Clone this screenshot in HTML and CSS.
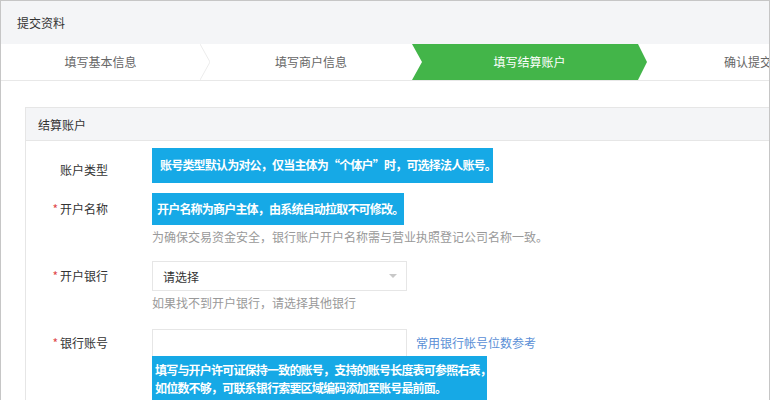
FILE: index.html
```html
<!DOCTYPE html>
<html lang="zh-CN">
<head>
<meta charset="utf-8">
<link rel="stylesheet" href="styles.css">
</head>
<body>
<div class="frame">
  <div class="page-head">提交资料</div>
  <div class="steps">
    <div class="step step-1">填写基本信息</div>
    <svg class="sep" width="10" height="36" viewBox="0 0 10 36"><polyline points="0,0 10,18 0,36" fill="none" stroke="#ececec" stroke-width="1"/></svg>
    <div class="step step-2">填写商户信息</div>
    <div class="step step-3">填写结算账户</div>
    <div class="step step-4">确认提交</div>
  </div>
  <div class="content">
    <div class="panel">
      <div class="panel-head">结算账户</div>
      <div class="panel-body">
        <div class="row row-1">
          <div class="label">账户类型</div>
          <div class="field">
            <div class="tip tip-1">账号类型默认为对公，仅当主体为“个体户”时，可选择法人账号。</div>
          </div>
        </div>
        <div class="row row-2">
          <div class="label"><span class="star">*</span>开户名称</div>
          <div class="field">
            <div class="tip tip-2">开户名称为商户主体，由系统自动拉取不可修改。</div>
            <div class="help">为确保交易资金安全，银行账户开户名称需与营业执照登记公司名称一致。</div>
          </div>
        </div>
        <div class="row row-3">
          <div class="label"><span class="star">*</span>开户银行</div>
          <div class="field">
            <div class="select"><span>请选择</span><span class="caret"></span></div>
            <div class="help">如果找不到开户银行，请选择其他银行</div>
          </div>
        </div>
        <div class="row row-4">
          <div class="label"><span class="star">*</span>银行账号</div>
          <div class="field">
            <div class="input-line">
              <div class="input"></div>
              <a class="link" href="#">常用银行帐号位数参考</a>
            </div>
            <div class="tip tip-3">填写与开户许可证保持一致的账号，支持的账号长度表可参照右表，<br>如位数不够，可联系银行索要区域编码添加至账号最前面。</div>
          </div>
        </div>
      </div>
    </div>
  </div>
</div>
</body>
</html>
```
FILE: styles.css
```css
* { box-sizing: border-box; }
html, body { margin: 0; padding: 0; background: #fff; }
body {
  font-family: "Noto Sans CJK SC", "Noto Sans", sans-serif;
  font-size: 12px;
  color: #333;
  width: 771px;
  height: 400px;
  overflow: hidden;
}
.frame {
  width: 770px;
  height: 400px;
  border: 1px solid #c6c6c6;
  border-bottom: none;
  overflow: hidden;
}
.page-head {
  height: 43px;
  line-height: 43px;
  padding-left: 16px;
  background: #f4f5f7;
  color: #333;
}
.steps {
  display: flex;
  height: 37px;
  border-bottom: 1px solid #e8e8e8;
  white-space: nowrap;
}
.step {
  flex: none;
  height: 36px;
  line-height: 36px;
  text-align: center;
  color: #666;
}
.step-1 { width: 199px; }
.sep { flex: none; display: block; }
.step-2 { width: 202px; }
.step-3 {
  width: 235px;
  background: #43b549;
  color: #fff;
  clip-path: polygon(0 0, 226px 0, 235px 50%, 226px 100%, 0 100%, 10px 50%);
}
.step-4 { width: 202px; }
.content {
  padding: 26px 0 0 24px;
}
.panel {
  border: 1px solid #e6e6e6;
  border-right: none;
}
.panel-head {
  height: 33px;
  line-height: 33px;
  padding-left: 12px;
  background: #f4f5f7;
  border-bottom: 1px solid #e6e6e6;
  color: #333;
}
.panel-body {
  padding-top: 7px;
}
.row {
  display: flex;
  gap: 44px;
}
.label {
  width: 82px;
  flex: none;
  text-align: right;
  color: #333;
}
.star {
  color: #e0494c;
  margin-right: 2px;
}
.field {
  display: flex;
  flex-direction: column;
  align-items: flex-start;
}
.tip {
  background: #16a9e6;
  color: #fff;
  font-weight: 700;
  letter-spacing: -0.8px;
  white-space: nowrap;
}
.tip-1 {
  width: 341px;
  height: 35px;
  line-height: 34px;
  padding-left: 8px;
}
.row-1 .label { line-height: 20px; margin-top: 12px; }
.row-2 { margin-top: 10px; }
.row-2 .label { line-height: 32px; }
.tip-2 {
  width: 252px;
  height: 32px;
  line-height: 32px;
  padding-left: 5px;
}
.help {
  color: #999;
  line-height: 20px;
  margin-top: 2px;
  white-space: nowrap;
}
.row-3 { margin-top: 14px; }
.row-3 .label { line-height: 30px; }
.select {
  width: 255px;
  height: 30px;
  border: 1px solid #e6e6e6;
  display: flex;
  align-items: center;
  justify-content: space-between;
  padding: 0 9px 0 10px;
  color: #333;
}
.caret {
  width: 0;
  height: 0;
  border-left: 4px solid transparent;
  border-right: 4px solid transparent;
  border-top: 4px solid #c8c8c8;
}
.row-4 { margin-top: 16px; }
.row-4 .label { line-height: 27px; }
.input-line {
  display: flex;
  align-items: center;
  gap: 9px;
}
.input {
  width: 255px;
  height: 27px;
  border: 1px solid #e6e6e6;
  border-bottom: none;
}
.link {
  color: #5a8fd6;
  text-decoration: none;
  white-space: nowrap;
}
.tip-3 {
  width: 335px;
  line-height: 18px;
  padding: 5px 0 6px 3px;
}
```
